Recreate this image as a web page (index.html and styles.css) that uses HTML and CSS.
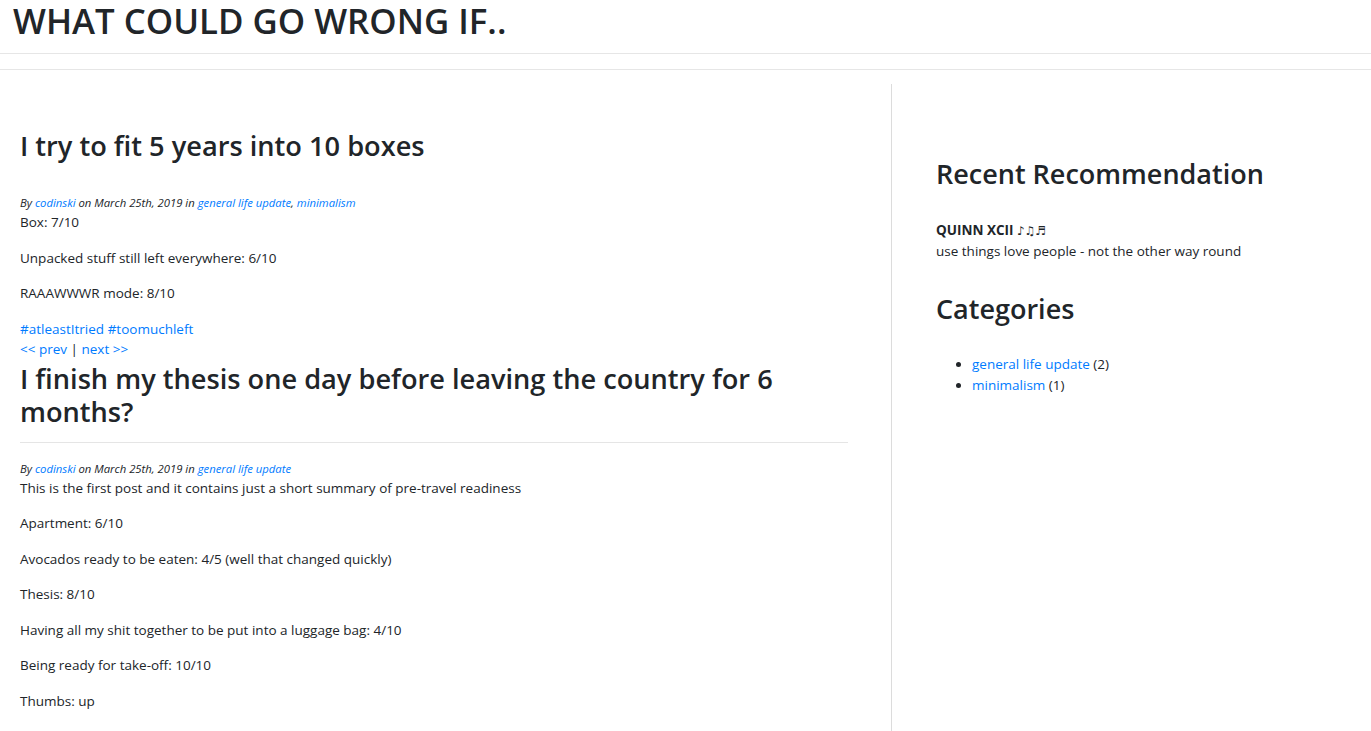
FILE: index.html
```html
<!DOCTYPE html>
<html lang="en">
<head>
<meta charset="utf-8">
<title>What could go wrong if..</title>
<link rel="stylesheet" href="styles.css">
</head>
<body>
<header class="site-header">
  <h1 class="site-title">WHAT COULD GO WRONG IF..</h1>
</header>
<div class="subbar"></div>
<div class="layout">
  <main class="content">
    <article class="post">
      <div class="post-head">
        <h2 class="post-title post-title--lead">I try to fit 5 years into 10 boxes</h2>
      </div>
      <p class="meta">By <a href="#">codinski</a> on March 25th, 2019 in <a href="#">general life update</a>, <a href="#">minimalism</a></p>
      <p>Box: 7/10</p>
      <p>Unpacked stuff still left everywhere: 6/10</p>
      <p>RAAAWWWR mode: 8/10</p>
      <p class="tags"><a href="#">#atleastItried</a> <a href="#">#toomuchleft</a></p>
    </article>
    <nav class="pager"><a href="#">&lt;&lt; prev</a> | <a href="#">next &gt;&gt;</a></nav>
    <article class="post">
      <div class="post-head post-head--ruled">
        <h2 class="post-title">I finish my thesis one day before leaving the country for 6 months?</h2>
      </div>
      <p class="meta">By <a href="#">codinski</a> on March 25th, 2019 in <a href="#">general life update</a></p>
      <p>This is the first post and it contains just a short summary of pre-travel readiness</p>
      <p>Apartment: 6/10</p>
      <p>Avocados ready to be eaten: 4/5 (well that changed quickly)</p>
      <p>Thesis: 8/10</p>
      <p>Having all my shit together to be put into a luggage bag: 4/10</p>
      <p>Being ready for take-off: 10/10</p>
      <p>Thumbs: up</p>
    </article>
  </main>
  <aside class="sidebar">
    <h2 class="side-title side-title--first">Recent Recommendation</h2>
    <div class="reco">
      <strong class="reco-name">QUINN XCII <span class="notes">♪♫♬</span></strong>
      <div>use things love people - not the other way round</div>
    </div>
    <h2 class="side-title">Categories</h2>
    <ul class="cats">
      <li><a href="#">general life update</a> (2)</li>
      <li><a href="#">minimalism</a> (1)</li>
    </ul>
  </aside>
</div>
</body>
</html>
```
FILE: styles.css
```css
html, body {
  margin: 0;
  padding: 0;
  background: #fff;
}
body {
  font-family: "Open Sans", "Noto Sans", sans-serif;
  font-size: 13.5px;
  line-height: 19.5px;
  color: #212529;
}
a {
  color: #007bff;
  text-decoration: none;
}
p {
  margin: 0 0 16px;
}

.site-header {
  padding: 0 13px 12px;
  border-bottom: 1px solid #e6e6e6;
}
.site-title {
  margin: 0;
  font-size: 34.8px;
  line-height: 41px;
  font-weight: 600;
  color: #212529;
}
.subbar {
  height: 15px;
  border-bottom: 1px solid #e6e6e6;
}

.layout {
  display: grid;
  grid-template-columns: 891px 1fr;
  margin-top: 14px;
}
.content {
  padding: 0 43px 40px 20px;
}
.sidebar {
  border-left: 1px solid #dcdcdc;
  padding-left: 44px;
}

.post-head {
  padding-bottom: 13px;
  border-bottom: 1px solid transparent;
  margin-bottom: 16px;
}
.post-head--ruled {
  border-bottom-color: #e5e5e5;
}
.post-title {
  margin: 2px 0 0;
  font-size: 27.2px;
  line-height: 33.6px;
  font-weight: 600;
}
.post-title--lead {
  margin-top: 45px;
  line-height: 34px;
}
.meta {
  margin: 0;
  font-size: 11.3px;
  line-height: 20px;
  font-style: italic;
}
.tags {
  margin-bottom: 1px;
}
.pager {
  line-height: 19.5px;
}

.side-title {
  margin: 30.5px 0 0;
  font-size: 27px;
  line-height: 33.6px;
  font-weight: 600;
}
.side-title--first {
  margin-top: 73.4px;
}
.reco {
  margin-top: 29px;
  line-height: 20.5px;
}
.reco-name {
  font-weight: 700;
}
.notes {
  font-family: "DejaVu Sans", sans-serif;
  font-weight: 400;
  font-size: 12px;
}
.cats {
  margin: 28px 0 0;
  padding-left: 36px;
  line-height: 20.5px;
}
```
